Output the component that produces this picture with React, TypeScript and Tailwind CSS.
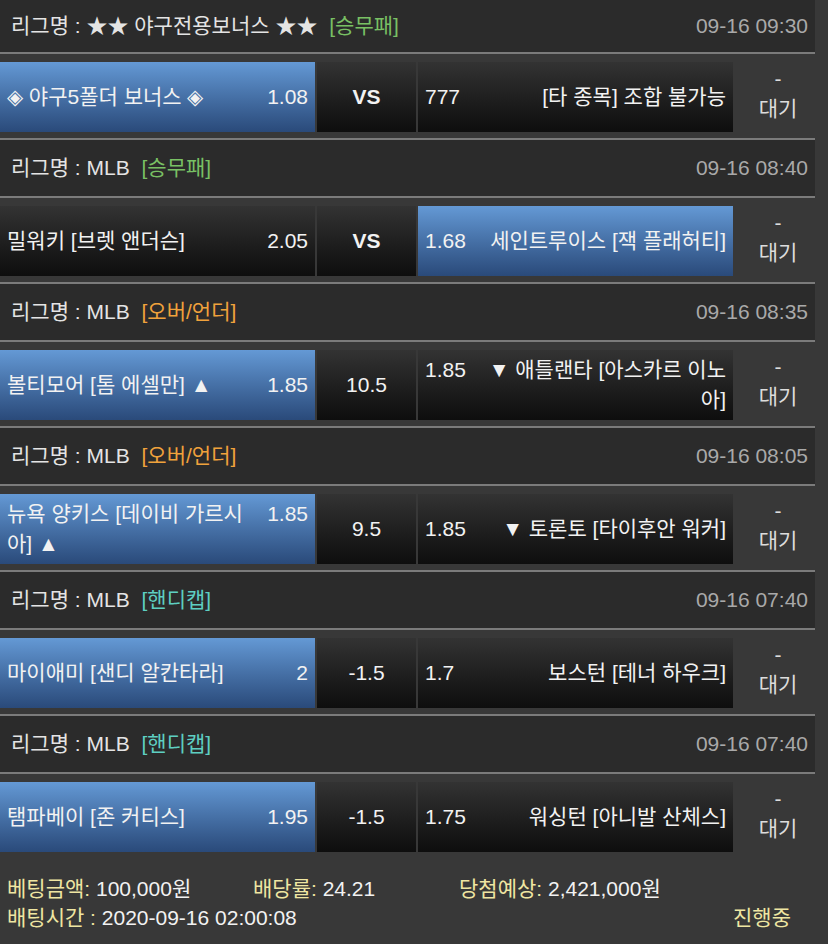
import React from 'react';

type Match = {
  league: string;
  market: string;
  marketClass: string;
  date: string;
  home: string;
  homeOdds: string;
  mid: string;
  away: string;
  awayOdds: string;
  pick: 'home' | 'away';
};

const GREEN = 'text-[#79c064]';
const ORANGE = 'text-[#f0a23c]';
const TEAL = 'text-[#5ecfc2]';

const matches: Match[] = [
  { league: '★★ 야구전용보너스 ★★', market: '승무패', marketClass: GREEN, date: '09-16 09:30', home: '◈ 야구5폴더 보너스 ◈', homeOdds: '1.08', mid: 'VS', away: '[타 종목] 조합 불가능', awayOdds: '777', pick: 'home' },
  { league: 'MLB', market: '승무패', marketClass: GREEN, date: '09-16 08:40', home: '밀워키 [브렛 앤더슨]', homeOdds: '2.05', mid: 'VS', away: '세인트루이스 [잭 플래허티]', awayOdds: '1.68', pick: 'away' },
  { league: 'MLB', market: '오버/언더', marketClass: ORANGE, date: '09-16 08:35', home: '볼티모어 [톰 에셀만] ▲', homeOdds: '1.85', mid: '10.5', away: '▼ 애틀랜타 [아스카르 이노아]', awayOdds: '1.85', pick: 'home' },
  { league: 'MLB', market: '오버/언더', marketClass: ORANGE, date: '09-16 08:05', home: '뉴욕 양키스 [데이비 가르시아] ▲', homeOdds: '1.85', mid: '9.5', away: '▼ 토론토 [타이후안 워커]', awayOdds: '1.85', pick: 'home' },
  { league: 'MLB', market: '핸디캡', marketClass: TEAL, date: '09-16 07:40', home: '마이애미 [샌디 알칸타라]', homeOdds: '2', mid: '-1.5', away: '보스턴 [테너 하우크]', awayOdds: '1.7', pick: 'home' },
  { league: 'MLB', market: '핸디캡', marketClass: TEAL, date: '09-16 07:40', home: '탬파베이 [존 커티스]', homeOdds: '1.95', mid: '-1.5', away: '워싱턴 [아니발 산체스]', awayOdds: '1.75', pick: 'home' },
];

const picked = 'bg-linear-to-b from-[#6499d5] to-[#2a4a7a]';
const plain = 'bg-linear-to-b from-[#333333] to-[#0e0e0e]';

function TeamCell({ name, odds, side, active }: { name: string; odds: string; side: 'home' | 'away'; active: boolean }) {
  return (
    <div className={`w-[315px] shrink-0 flex items-center px-[7px] text-[#f2f2f2] ${active ? picked : plain}`}>
      {side === 'home' ? (
        <div className="flex w-full items-start justify-between">
          <span className="w-[245px] leading-[30px]">{name}</span>
          <span className="leading-[30px]">{odds}</span>
        </div>
      ) : (
        <div className="flex w-full items-start justify-between">
          <span className="leading-[30px]">{odds}</span>
          <span className="w-[245px] text-right leading-[30px]">{name}</span>
        </div>
      )}
    </div>
  );
}

function MatchBlock({ m, first, last }: { m: Match; first: boolean; last: boolean }) {
  return (
    <div className="w-[815px]">
      <div className={`flex items-center justify-between bg-[#2b2b2b] pl-[11px] pr-[7px] border-b-2 border-[#7b7b7b] ${first ? 'h-[54px]' : 'h-[58px]'}`}>
        <div className="text-[#e4e4e4]">
          리그명 : {m.league} <span className={`ml-[6px] ${m.marketClass}`}>[{m.market}]</span>
        </div>
        <div className="text-[#a9a9a9]">{m.date}</div>
      </div>
      <div className={`pt-[8px] pb-[6px] ${last ? '' : 'border-b-2 border-[#7b7b7b]'}`}>
        <div className="flex h-[70px] gap-[2px]">
          <TeamCell name={m.home} odds={m.homeOdds} side="home" active={m.pick === 'home'} />
          <div className={`w-[99px] shrink-0 flex items-center justify-center text-[#f2f2f2] ${plain} ${m.mid === 'VS' ? 'font-bold' : ''}`}>
            {m.mid}
          </div>
          <TeamCell name={m.away} odds={m.awayOdds} side="away" active={m.pick === 'away'} />
          <div className="flex-1 flex flex-col items-center justify-center pl-[6px] pb-[6px] text-[#dcdcdc] leading-[30px]">
            <span>-</span>
            <span>대기</span>
          </div>
        </div>
      </div>
    </div>
  );
}

export default function App() {
  return (
    <div className="w-[828px] min-h-[944px] bg-[#383838] text-[21px] font-['Liberation_Sans','Noto_Sans_CJK_KR',sans-serif] overflow-hidden">
      {matches.map((m, i) => (
        <MatchBlock key={i} m={m} first={i === 0} last={i === matches.length - 1} />
      ))}
      <div className="w-[815px] pt-[16px] pl-[7px] pr-[24px] leading-[29px]">
        <div className="grid grid-cols-[246px_206px_1fr]">
          <div><span className="text-[#efe6a2]">베팅금액:</span> <span className="text-[#f2f2f2]">100,000원</span></div>
          <div><span className="text-[#efe6a2]">배당률:</span> <span className="text-[#f2f2f2]">24.21</span></div>
          <div><span className="text-[#efe6a2]">당첨예상:</span> <span className="text-[#f2f2f2]">2,421,000원</span></div>
        </div>
        <div className="flex justify-between">
          <div><span className="text-[#efe6a2]">배팅시간 :</span> <span className="text-[#f2f2f2]">2020-09-16 02:00:08</span></div>
          <div className="text-[#efe6a2]">진행중</div>
        </div>
      </div>
    </div>
  );
}
